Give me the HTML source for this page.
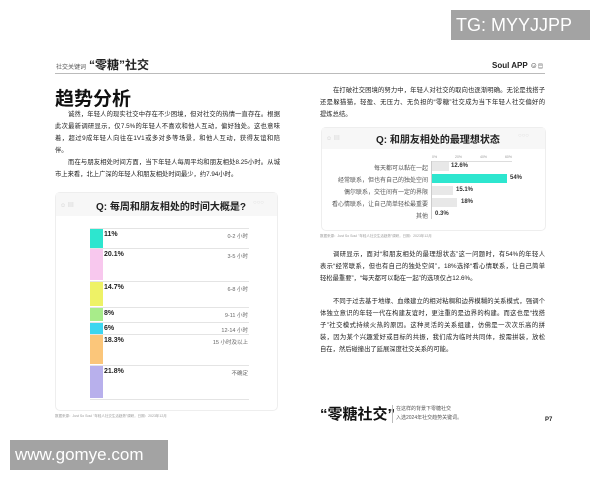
<!DOCTYPE html>
<html><head><meta charset="utf-8"><style>
*{margin:0;padding:0;box-sizing:border-box}
body{width:600px;height:480px;background:#fff;position:relative;overflow:hidden;font-family:"Liberation Sans","Noto Sans CJK SC",sans-serif;color:#222}
.a{position:absolute;white-space:nowrap}
.p{position:absolute;font-size:6.3px;line-height:12px;color:#222;width:225px}
.p div{height:12px;overflow:hidden;text-align:justify;text-align-last:justify}
.p div.i{padding-left:13px}
.p div.e{text-align-last:left}
.lb{font-size:7px;color:#222;font-weight:bold}
.rl{font-size:5.5px;color:#666;text-align:right;width:80px}
.seg{position:absolute;left:90px;width:13px}
.ln{position:absolute;left:90px;width:159px;height:1px;background:#e4e4e4}
.rr{position:absolute;font-size:6px;color:#555;text-align:right;width:110px;left:318px}
.bar{position:absolute;left:432px;height:9px;background:#e8e8e8}
.bv{position:absolute;font-size:6px;font-weight:bold;color:#333}
</style></head><body>
<div class="a" style="left:451px;top:10px;width:139px;height:30px;background:#a3a3a3;color:#fff;font-size:18px;line-height:30px;padding-left:5px">TG: MYYJJPP</div>
<div class="a" style="left:10px;top:440px;width:158px;height:30px;background:#a3a3a3;color:#fff;font-size:17px;line-height:30px;padding-left:5px">www.gomye.com</div>

<div class="a" style="left:56px;top:62px;font-size:6px;color:#555">社交关键词</div>
<div class="a" style="left:89px;top:56px;font-size:12px;font-weight:bold">“零糖”社交</div>
<div class="a" style="left:55px;top:73px;width:490px;height:1px;background:#bbb"></div>
<div class="a" style="left:492px;top:61px;font-size:8px;font-weight:bold">Soul APP ☺<span style="font-size:5px">▤</span></div>

<div class="a" style="left:55px;top:84px;font-size:19px;font-weight:bold;color:#111">趋势分析</div>
<div class="p" style="left:55px;top:109px">
<div class="i">诚然，年轻人的现实社交中存在不少困境，但对社交的热情一直存在。根据</div>
<div>此次最新调研显示，仅7.5%的年轻人不喜欢和他人互动，偏好独处。这也意味</div>
<div>着，超过9成年轻人向往在1V1或多对多等场景，和他人互动，获得友谊和陪</div>
<div class="e">伴。</div>
</div>
<div class="p" style="left:55px;top:157px">
<div class="i">而在与朋友相处时间方面，当下年轻人每周平均和朋友相处8.25小时。从城</div>
<div class="e">市上来看，北上广深的年轻人和朋友相处时间最少，约7.94小时。</div>
</div>

<div class="a" style="left:55px;top:192px;width:223px;height:219px;border:1px solid #eee;border-radius:5px;background:#fff"></div>
<div class="a" style="left:56px;top:193px;width:221px;height:23px;background:#f7f7f7"></div>
<div class="a" style="left:60px;top:200px;font-size:6px;color:#ccc">☺ ▤</div>
<div class="a" style="left:96px;top:198px;font-size:10px;font-weight:bold">Q: 每周和朋友相处的时间大概是?</div>
<div class="a" style="left:253px;top:200px;font-size:6px;color:#ddd">○○○</div>

<div class="seg" style="top:228px;height:20px;background:#2de6cf"></div>
<div class="seg" style="top:249px;height:31px;background:#f8c8ee"></div>
<div class="seg" style="top:282px;height:24px;background:#eef266"></div>
<div class="seg" style="top:308px;height:13px;background:#a8ec8a"></div>
<div class="seg" style="top:323px;height:11px;background:#3cd6f0"></div>
<div class="seg" style="top:335px;height:29px;background:#fbc67a"></div>
<div class="seg" style="top:366px;height:32px;background:#b8b0ec"></div>
<div class="ln" style="top:228px"></div><div class="ln" style="top:248px"></div><div class="ln" style="top:281px"></div><div class="ln" style="top:307px"></div><div class="ln" style="top:322px"></div><div class="ln" style="top:334px"></div><div class="ln" style="top:365px"></div><div class="ln" style="top:399px"></div>
<div class="a lb" style="left:104px;top:231px">11%</div><div class="a rl" style="left:168px;top:232px">0-2 小时</div>
<div class="a lb" style="left:104px;top:251px">20.1%</div><div class="a rl" style="left:168px;top:252px">3-5 小时</div>
<div class="a lb" style="left:104px;top:284px">14.7%</div><div class="a rl" style="left:168px;top:285px">6-8 小时</div>
<div class="a lb" style="left:104px;top:310px">8%</div><div class="a rl" style="left:168px;top:311px">9-11 小时</div>
<div class="a lb" style="left:104px;top:325px">6%</div><div class="a rl" style="left:168px;top:326px">12-14 小时</div>
<div class="a lb" style="left:104px;top:337px">18.3%</div><div class="a rl" style="left:168px;top:338px">15 小时及以上</div>
<div class="a lb" style="left:104px;top:368px">21.8%</div><div class="a rl" style="left:168px;top:369px">不确定</div>
<div class="a" style="left:55px;top:414px;font-size:3.5px;color:#999">数据来源：Just So Soul "年轻人社交生活趋势"调研，日期：2023年12月</div>

<div class="p" style="left:320px;top:85px">
<div class="i">在打破社交困境的努力中，年轻人对社交的取向也逐渐明确。无论是找搭子</div>
<div>还是躲猫猫，轻盈、无压力、无负担的“零糖”社交成为当下年轻人社交偏好的</div>
<div class="e">提炼总结。</div>
</div>

<div class="a" style="left:321px;top:127px;width:225px;height:104px;border:1px solid #eee;border-radius:5px"></div>
<div class="a" style="left:322px;top:128px;width:223px;height:21px;background:#f7f7f7"></div>
<div class="a" style="left:326px;top:133px;font-size:6px;color:#ccc">☺ ▤</div>
<div class="a" style="left:376px;top:131px;font-size:10px;font-weight:bold">Q: 和朋友相处的最理想状态</div>
<div class="a" style="left:518px;top:133px;font-size:6px;color:#ddd">○○○</div>
<div class="a" style="left:432px;top:155px;font-size:3.5px;color:#999;word-spacing:17px">0% 20% 40% 60%</div>
<div class="a" style="left:432px;top:161px;width:80px;height:1px;background:#ddd"></div>
<div class="a" style="left:431px;top:161px;width:1px;height:58px;background:#ccc"></div>
<div class="rr" style="top:163px">每天都可以黏在一起</div><div class="bar" style="top:162px;width:17px"></div><div class="bv" style="left:451px;top:163px">12.6%</div>
<div class="rr" style="top:175px">经常联系，但也有自己的独处空间</div><div class="bar" style="top:174px;width:75px;background:#2de6cf"></div><div class="bv" style="left:510px;top:175px">54%</div>
<div class="rr" style="top:187px">偶尔联系，交往间有一定的界限</div><div class="bar" style="top:186px;width:21px"></div><div class="bv" style="left:456px;top:187px">15.1%</div>
<div class="rr" style="top:199px">看心情联系，让自己简单轻松最重要</div><div class="bar" style="top:198px;width:25px"></div><div class="bv" style="left:461px;top:199px">18%</div>
<div class="rr" style="top:211px">其他</div><div class="bv" style="left:435px;top:211px">0.3%</div>
<div class="a" style="left:320px;top:234px;font-size:3.5px;color:#999">数据来源：Just So Soul "年轻人社交生活趋势"调研，日期：2023年12月</div>

<div class="p" style="left:320px;top:249px">
<div class="i">调研显示，面对“和朋友相处的最理想状态”这一问题时，有54%的年轻人</div>
<div>表示“经常联系，但也有自己的独处空间”，18%选择“看心情联系，让自己简单</div>
<div class="e">轻松最重要”，“每天都可以黏在一起”的选项仅占12.6%。</div>
</div>
<div class="p" style="left:320px;top:296px">
<div class="i">不同于过去基于地缘、血缘建立的相对粘稠和边界模糊的关系模式，强调个</div>
<div>体独立意识的年轻一代在构建友谊时，更注重的是边界的构建。而这也是“找搭</div>
<div>子”社交模式持续火热的原因。这种灵活的关系组建，仿佛是一次次乐高的拼</div>
<div>装，因为某个兴趣爱好或目标的共振，我们成为临时共同体，按需拼装，放松</div>
<div class="e">自在，然后碰撞出了延展深度社交关系的可能。</div>
</div>

<div class="a" style="left:320px;top:403px;font-size:15px;font-weight:bold;color:#111">“零糖社交”</div>
<div class="a" style="left:392px;top:405px;width:1px;height:18px;background:#bbb"></div>
<div class="a" style="left:396px;top:405px;font-size:5px;line-height:9px;color:#555">在这样的背景下零糖社交<br>入选2024年社交趋势关键词。</div>
<div class="a" style="left:545px;top:417px;font-size:6px;font-weight:bold">P7</div>
</body></html>
